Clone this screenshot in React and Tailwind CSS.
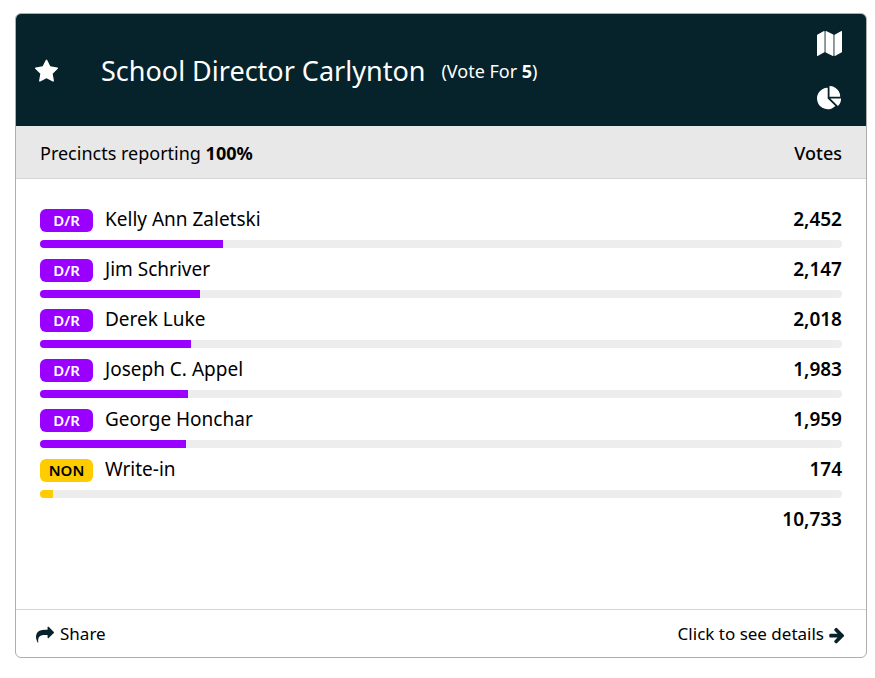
const candidates = [
  { party: 'D/R', name: 'Kelly Ann Zaletski', votes: 2452 },
  { party: 'D/R', name: 'Jim Schriver', votes: 2147 },
  { party: 'D/R', name: 'Derek Luke', votes: 2018 },
  { party: 'D/R', name: 'Joseph C. Appel', votes: 1983 },
  { party: 'D/R', name: 'George Honchar', votes: 1959 },
  { party: 'NON', name: 'Write-in', votes: 174 },
]

const total = candidates.reduce((sum, c) => sum + c.votes, 0)

const partyStyles = {
  'D/R': { badge: 'bg-[#9900ff] text-white', bar: 'bg-[#9900ff]' },
  NON: { badge: 'bg-[#ffcc00] text-black', bar: 'bg-[#ffcc00]' },
}

const icons = {
  star: 'M1728 647q0 22-26 48l-363 354 86 500q1 7 1 20 0 21-10.5 35.5t-30.5 14.5q-19 0-40-12l-449-236-449 236q-22 12-40 12-21 0-31.5-14.5t-10.5-35.5q0-6 2-20l86-500-364-354q-25-27-25-48 0-37 56-46l502-73 225-455q19-41 49-41t49 41l225 455 502 73q56 9 56 46z',
  map: 'M512 0q13 0 22.5 9.5t9.5 22.5v1472q0 20-17 28l-480 256q-7 4-15 4-13 0-22.5-9.5t-9.5-22.5v-1472q0-20 17-28l480-256q7-4 15-4zm1248 0q13 0 22.5 9.5t9.5 22.5v1472q0 20-17 28l-480 256q-7 4-15 4-13 0-22.5-9.5t-9.5-22.5v-1472q0-20 17-28l480-256q7-4 15-4zm-1120 0q8 0 14 3l512 256q18 10 18 29v1472q0 13-9.5 22.5t-22.5 9.5q-8 0-14-3l-512-256q-18-10-18-29v-1472q0-13 9.5-22.5t22.5-9.5z',
  pie: 'M768 890l546 546q-106 108-247.5 168t-298.5 60q-209 0-385.5-103t-279.5-279.5-103-385.5 103-385.5 279.5-279.5 385.5-103v762zm187 6h773q0 157-60 298.5t-168 247.5zm709-128h-768v-768q209 0 385.5 103t279.5 279.5 103 385.5z',
  share: 'M1792 640q0 26-19 45l-512 512q-19 19-45 19t-45-19-19-45v-256h-224q-98 0-175.5 6t-154 21.5-133 42.5-105.5 69.5-80 101-48.5 138.5-17.5 181q0 55 5 123 0 6 2.5 23.5t2.5 26.5q0 15-8.5 25t-23.5 10q-16 0-28-17-7-9-13-22t-13.5-30-10.5-24q-127-285-127-451 0-199 53-333 162-403 875-403h224v-256q0-26 19-45t45-19 45 19l512 512q19 19 19 45z',
  arrow: 'M1600 960q0 54-37 91l-651 651q-39 37-91 37-51 0-90-37l-75-75q-38-38-38-91t38-91l293-293h-704q-52 0-84.5-37.5t-32.5-90.5v-128q0-53 32.5-90.5t84.5-37.5h704l-293-294q-38-36-38-90t38-90l75-75q38-38 90-38 53 0 91 38l651 651q37 35 37 90z',
}

function Icon({ name, className }) {
  return (
    <svg viewBox="0 0 1792 1792" fill="currentColor" aria-hidden="true" className={className}>
      <path d={icons[name]} />
    </svg>
  )
}

function CandidateRow({ party, name, votes }) {
  const style = partyStyles[party]
  return (
    <li>
      <div className="flex h-[42px] items-center pt-0.5">
        <span className={`w-[53px] rounded-md text-center text-[15px] leading-[23px] font-semibold ${style.badge}`}>
          {party}
        </span>
        <span className="ml-3">{name}</span>
        <span className="ml-auto font-semibold">{votes.toLocaleString('en-US')}</span>
      </div>
      <div className="h-2 overflow-hidden rounded-full bg-[#ededed]">
        <div className={`h-full ${style.bar}`} style={{ width: `${(votes / total) * 100}%` }} />
      </div>
    </li>
  )
}

export default function App() {
  return (
    <main className="pt-[13px] pr-2 pb-5 pl-[15px] font-['Noto_Sans','Open_Sans',sans-serif] text-lg text-black">
      <article className="overflow-hidden rounded-md border border-[#adadad] bg-white">
        <header className="flex h-28 items-center bg-[#06232b] pt-0.5 pr-6 pl-[18px] text-white">
          <button type="button" aria-label="Add to favorites">
            <Icon name="star" className="size-[25px]" />
          </button>
          <h1 className="ml-[42px] text-[27px]">School Director Carlynton</h1>
          <span className="ml-4">
            (Vote For <b className="font-bold">5</b>)
          </span>
          <div className="ml-auto flex flex-col gap-[30px]">
            <button type="button" aria-label="Show map">
              <Icon name="map" className="size-[25px]" />
            </button>
            <button type="button" aria-label="Show chart">
              <Icon name="pie" className="size-[25px]" />
            </button>
          </div>
        </header>
        <div className="flex h-[53px] items-center justify-between border-b border-[#d5d5d5] bg-[#e8e8e8] px-6 pt-0.5">
          <span>
            Precincts reporting <b className="font-bold">100%</b>
          </span>
          <span className="font-medium">Votes</span>
        </div>
        <section className="px-6 pt-[19px] pb-[69px] text-[19px]">
          <ul>
            {candidates.map((c) => (
              <CandidateRow key={c.name} {...c} />
            ))}
          </ul>
          <div className="flex h-[42px] items-center justify-end pt-0.5 font-semibold">
            {total.toLocaleString('en-US')}
          </div>
        </section>
        <footer className="flex h-12 items-center justify-between border-t border-[#d5d5d5] px-5 pt-0.5 text-[17px]">
          <button type="button" className="flex items-center gap-1.5">
            <Icon name="share" className="size-[18px] text-[#06232b]" />
            Share
          </button>
          <a href="#details" className="flex items-center gap-1">
            Click to see details
            <Icon name="arrow" className="size-[18px] text-[#06232b]" />
          </a>
        </footer>
      </article>
    </main>
  )
}
